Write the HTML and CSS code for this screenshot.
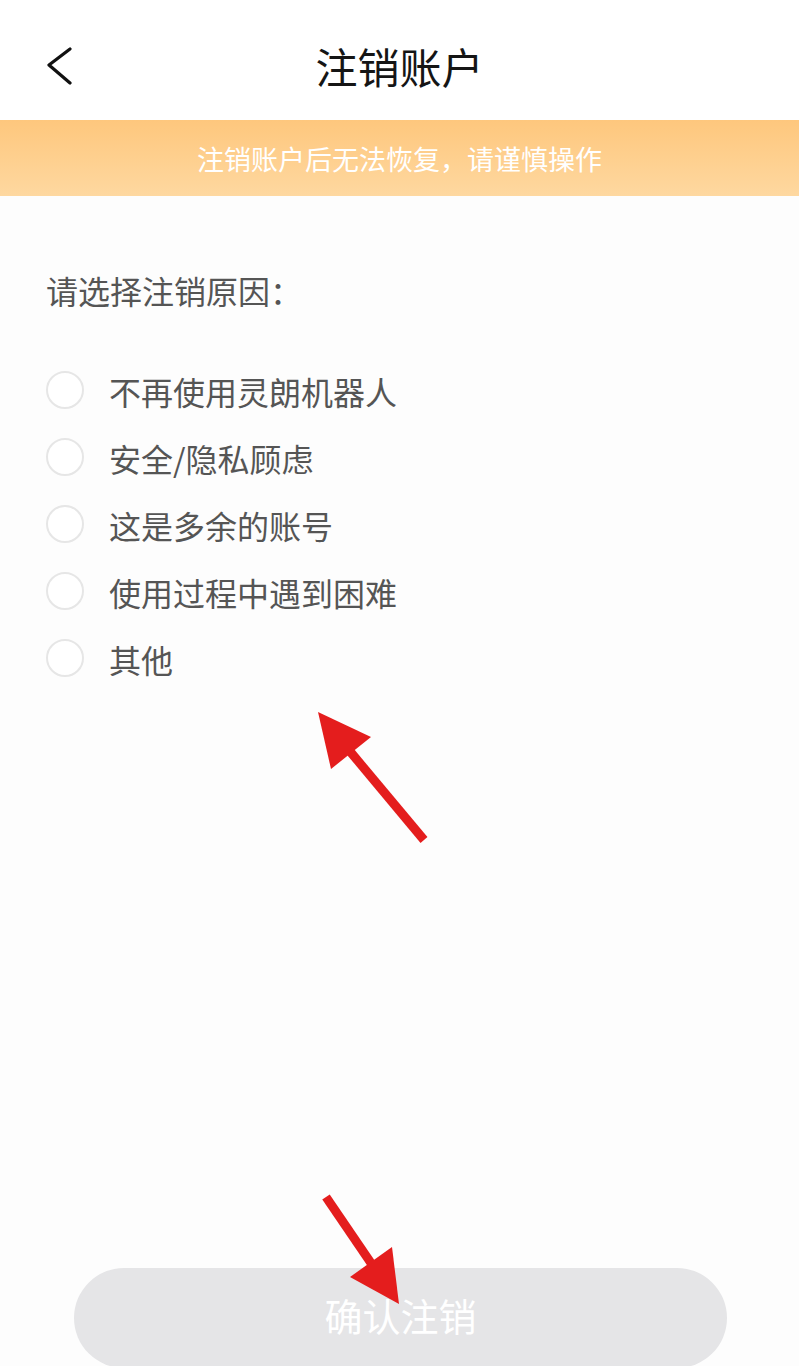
FILE: index.html
```html
<!DOCTYPE html>
<html lang="zh-CN">
<head>
<meta charset="utf-8">
<title>注销账户</title>
<link rel="stylesheet" href="styles.css">
</head>
<body>
<div class="page">
  <header class="topbar">
    <button class="back" aria-label="返回">
      <svg width="30" height="40" viewBox="0 0 30 40"><polyline points="24,2 3,18 24,36" fill="none" stroke="#111" stroke-width="3.2" stroke-linecap="round" stroke-linejoin="round"/></svg>
    </button>
    <h1 class="title">注销账户</h1>
  </header>
  <div class="notice">注销账户后无法恢复，请谨慎操作</div>
  <main class="content">
    <p class="prompt">请选择注销原因：</p>
    <ul class="reasons">
      <li class="reason"><span class="radio"></span><span class="label">不再使用灵朗机器人</span></li>
      <li class="reason"><span class="radio"></span><span class="label">安全/隐私顾虑</span></li>
      <li class="reason"><span class="radio"></span><span class="label">这是多余的账号</span></li>
      <li class="reason"><span class="radio"></span><span class="label">使用过程中遇到困难</span></li>
      <li class="reason"><span class="radio"></span><span class="label">其他</span></li>
    </ul>
    <button class="confirm">确认注销</button>
  </main>
  <svg class="marks" width="799" height="1366" viewBox="0 0 799 1366">
    <line x1="424" y1="840" x2="348" y2="749" stroke="#e41d1d" stroke-width="9"/>
    <polygon points="318,712 371,737 331,769" fill="#e41d1d"/>
    <line x1="326" y1="1197" x2="373" y2="1266" stroke="#e41d1d" stroke-width="9"/>
    <polygon points="399,1304 350,1277 392,1247" fill="#e41d1d"/>
  </svg>
</div>
</body>
</html>
```

FILE: styles.css
```css
* { box-sizing: border-box; }

html, body {
  margin: 0;
  padding: 0;
}

body {
  font-family: "Noto Sans CJK SC", "Noto Sans", sans-serif;
  background: #fdfdfd;
}

.page {
  position: relative;
  width: 799px;
  height: 1366px;
  overflow: hidden;
  display: flex;
  flex-direction: column;
}

.topbar {
  height: 120px;
  background: #ffffff;
  display: flex;
  align-items: center;
  justify-content: center;
  position: relative;
  padding-top: 12px;
}

.back {
  position: absolute;
  left: 46px;
  top: 47px;
  width: 30px;
  height: 40px;
  padding: 0;
  border: 0;
  background: none;
}

.back svg { display: block; }

.title {
  margin: 0;
  font-size: 42px;
  font-weight: 400;
  color: #151515;
  line-height: 1;
}

.notice {
  height: 76px;
  background: linear-gradient(#fec77d, #fed8a0);
  color: #ffffff;
  font-size: 27px;
  display: flex;
  align-items: center;
  justify-content: center;
}

.content {
  flex: 1;
  display: flex;
  flex-direction: column;
  padding: 72px 0 0 46px;
}

.prompt {
  margin: 0;
  height: 44px;
  line-height: 44px;
  font-size: 32px;
  color: #555555;
}

.reasons {
  list-style: none;
  margin: 44px 0 0;
  padding: 0;
}

.reason {
  height: 67px;
  display: flex;
  align-items: center;
}

.radio {
  width: 38px;
  height: 38px;
  border: 2px solid #e6e6e6;
  border-radius: 50%;
  background: #ffffff;
  flex: none;
}

.label {
  margin-left: 25px;
  font-size: 32px;
  color: #555555;
  padding-top: 3px;
}

.confirm {
  margin: auto 0 -2px 28px;
  width: 653px;
  height: 100px;
  border: 0;
  border-radius: 50px;
  background: #e5e5e7;
  color: #ffffff;
  font-family: inherit;
  font-size: 38px;
  padding: 0 0 8px;
}

.marks {
  position: absolute;
  left: 0;
  top: 0;
  pointer-events: none;
}
```
